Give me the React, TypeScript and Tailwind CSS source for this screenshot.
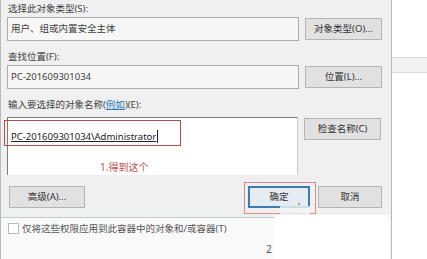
const font = { fontFamily: '"Noto Sans", "Noto Sans CJK SC", sans-serif' }

function Btn({ label, w = 'w-[77px]' }: { label: string; w?: string }) {
  return (
    <div
      className={`${w} flex h-[22px] shrink-0 items-center justify-center border border-[#b4b4b4] bg-[#e1e1e1] text-[9.5px] text-[#333]`}
    >
      {label}
    </div>
  )
}

export default function App() {
  return (
    <div
      className="relative flex h-[259px] w-[427px] overflow-hidden bg-white leading-none"
      style={font}
    >
      {/* dialog */}
      <div className="flex w-[392px] shrink-0 flex-col border-r border-l border-[#b9b9b9]">
        <div className="flex h-[217px] flex-col bg-[#f0f0f0] pl-[6px] pr-[8px] text-[#3d3d3d]">
          <div className="flex h-[17px] items-center pl-[1px] text-[9.5px]">选择此对象类型(S):</div>
          <div className="flex h-[24px] items-center gap-[6px]">
            <div className="flex h-[24px] w-[292px] items-center border border-[#acacac] bg-[#f7f7f7] pl-[3px] text-[9.5px]">
              用户、组或内置安全主体
            </div>
            <Btn label="对象类型(O)..." />
          </div>
          <div className="flex h-[24px] items-center pl-[1px] pt-[8px] text-[9.5px]">查找位置(F):</div>
          <div className="flex h-[24px] items-center gap-[6px]">
            <div className="flex h-[24px] w-[292px] items-center border border-[#acacac] bg-[#f7f7f7] pl-[3px] text-[9.5px]">
              PC-201609301034
            </div>
            <Btn label="位置(L)..." />
          </div>
          <div className="flex h-[28px] items-center pl-[1px] pt-[4px] text-[9.5px]">
            输入要选择的对象名称(
            <span className="text-[#2a7ab9] underline">例如</span>
            )(E):
          </div>
          <div className="flex h-[58px] items-start gap-[6px]">
            <div className="h-[58px] w-[291px] border border-[#7d7d7d] border-r-[#c8c8c8] border-b-0 bg-white pl-[3px] pt-[8px]">
              <span className="border-r border-[#222] pr-[1px] text-[9.5px] text-[#222] underline">
                PC-201609301034\Administrator
              </span>
            </div>
            <div className="pt-[1px]">
              <Btn label="检查名称(C)" />
            </div>
          </div>
          <div className="mt-[11px] flex items-center">
            <Btn label="高级(A)..." w="w-[76px] ml-[2px]" />
            <div className="ml-auto flex gap-[8px] pr-[1px]">
              <div className="flex h-[22px] w-[62px] items-center justify-center border-2 border-[#3b7db3] bg-[#e6edf2] text-[9.5px] text-[#333]">
                确定
              </div>
              <Btn label="取消" w="w-[64px]" />
            </div>
          </div>
        </div>
        <div className="flex-1 border-t border-[#bfcdd0] bg-[#f9f9f9] pl-[7px] pt-[5px]">
          <div className="flex items-center gap-[3px] text-[9.5px] text-[#555]">
            <span className="h-[11px] w-[11px] border border-[#bbb] bg-white" />
            仅将这些权限应用到此容器中的对象和/或容器(T)
          </div>
        </div>
      </div>

      {/* window behind */}
      <div className="flex flex-1 flex-col bg-white pt-[57px]">
        <div className="h-[16px] border-y border-[#dadada] bg-[#f3f3f3]" />
      </div>

      {/* annotations */}
      <div className="absolute left-[4px] top-[120px] h-[26px] w-[177px] border-[1.5px] border-[#b4504c]" />
      <div className="absolute left-[100px] top-[162px] text-[10px] text-[#c0504d]">1.得到这个</div>
      <div className="absolute left-[244px] top-[182px] h-[32px] w-[72px] border border-[#d98b8c]" />
      <div className="absolute left-[273px] top-[215px] h-[44px] w-[117px] rounded-tl-[6px] bg-white" />
      <div className="absolute left-[280px] top-[206px] h-[9px] w-[30px] bg-[#f3f5f6] opacity-80" />
      <div className="absolute left-[298px] top-[203px] h-[2px] w-[2px] bg-[#8bc34a]" />
      <div className="absolute left-[266px] top-[244px] text-[10px] text-[#555]">2</div>
    </div>
  )
}
